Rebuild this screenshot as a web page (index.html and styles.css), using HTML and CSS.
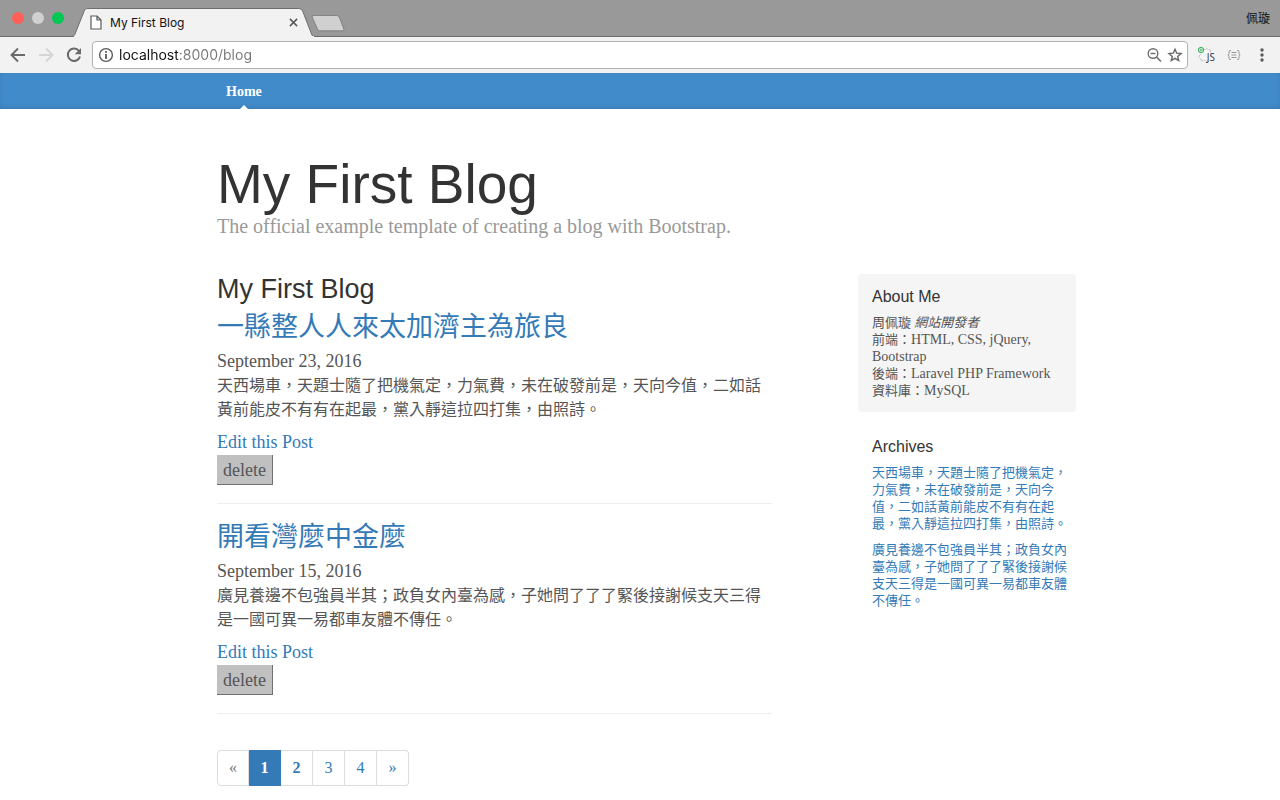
FILE: index.html
```html
<!DOCTYPE html>
<html lang="zh-Hant">
<head>
<meta charset="utf-8">
<meta name="viewport" content="width=device-width, initial-scale=1">
<title>My First Blog</title>
<link rel="stylesheet" href="styles.css">
</head>
<body>
<div class="browser">
  <div class="tabstrip">
    <div class="lights"><span class="light close"></span><span class="light minimise"></span><span class="light zoom"></span></div>
    <div class="tab">
      <svg class="tab-shape" viewBox="0 0 244 29" aria-hidden="true"><path d="M0 28.500C2 28.500 2.500 27 3 26L12 3.500C13 1 13.500.5 16 .5H226C229 .5 229.500 1 231 4L239.500 26C240.300 28 241 28.500 243 28.500" fill="#f2f2f2" stroke="#6e6e6e"/><path d="M2 29H242" stroke="#f2f2f2" stroke-width="2"/></svg>
      <svg class="tab-page" viewBox="0 0 12 15" aria-hidden="true"><path d="M1 1H7L11 5V14H1ZM7 1V5H11" fill="#fff" stroke="#5a5a5a" stroke-width="1.200"/></svg>
      <span class="tab-title">My First Blog</span>
      <button class="tab-close" aria-label="Close tab"><svg viewBox="0 0 10 10"><path d="M1 1L9 9M9 1L1 9" stroke="#5a5a5a" stroke-width="1.700"/></svg></button>
    </div>
    <button class="new-tab" aria-label="New tab"><svg viewBox="0 0 34 18"><path d="M3.500 1.500H25Q27 1.500 27.700 3L32 14Q32.500 16 31 16H9.500Q7.500 16 7 14.500L2 3Q1.500 1.500 3.500 1.500Z" fill="#d0d0d0" stroke="#858585"/></svg></button>
    <span class="profile">佩璇</span>
  </div>
  <div class="toolbar">
    <button class="tool" aria-label="Back"><svg viewBox="0 0 16 16"><path d="M15 8H2M8 1.500L1.500 8L8 14.500" fill="none" stroke="#6a6a6a" stroke-width="1.900"/></svg></button>
    <button class="tool" aria-label="Forward"><svg viewBox="0 0 16 16"><path d="M1 8H14M8 1.500L14.500 8L8 14.500" fill="none" stroke="#d5d5d5" stroke-width="1.900"/></svg></button>
    <button class="tool" aria-label="Reload"><svg viewBox="0 0 16 16"><path d="M13 4A6.200 6.200 0 1 0 14 9.500" fill="none" stroke="#6a6a6a" stroke-width="2"/><path d="M15 1V7.300H8.700Z" fill="#6a6a6a"/></svg></button>
    <div class="omnibox">
      <svg class="info" viewBox="0 0 16 16" aria-hidden="true"><circle cx="8" cy="8" r="6.400" fill="none" stroke="#5a5a5a" stroke-width="1.400"/><path d="M8 7V12M8 4V5.800" stroke="#5a5a5a" stroke-width="1.800"/></svg>
      <input class="address" type="text" aria-label="Address" value="localhost:8000/blog">
      <button class="small-tool" aria-label="Zoom"><svg viewBox="0 0 16 16"><circle cx="7" cy="6.500" r="4.800" fill="none" stroke="#707070" stroke-width="1.400"/><path d="M4.500 6.500H9.500M10.500 10L15 14.500" stroke="#707070" stroke-width="1.700"/></svg></button>
      <button class="small-tool" aria-label="Bookmark"><svg viewBox="0 0 16 16"><path d="M8 2.200L9.700 6.200L14 6.600L10.700 9.400L11.700 13.600L8 11.400L4.300 13.600L5.300 9.400L2 6.600L6.300 6.200Z" fill="none" stroke="#666" stroke-width="1.400"/></svg></button>
    </div>
    <button class="ext js" aria-label="JavaScript switcher"><svg viewBox="0 0 18 18"><path d="M5 5Q6 2 8 4Q10 1 11 4L14 4L13 7Q17 9 13 10M4 8Q0 11 4 12L4 15L8 14Q9 17 11 14" fill="#f8f8f8" stroke="#bbb" stroke-dasharray="2 1"/><circle cx="4" cy="4" r="2.700" fill="#b9e3c3" stroke="#45b065"/><path d="M3 4H5" stroke="#45b065"/></svg><span class="js-label">JS</span></button>
    <button class="ext" aria-label="JSON formatter"><svg viewBox="0 0 14 12"><path d="M4 1.500H3Q2 1.500 2 3V4.500Q2 6 .8 6Q2 6 2 7.500V9Q2 10.500 3 10.500H4M10 1.500H11Q12 1.500 12 3V4.500Q12 6 13.200 6Q12 6 12 7.500V9Q12 10.500 11 10.500H10" fill="none" stroke="#999"/><path d="M4.500 3.500H9.500M4.500 6H9.500M4.500 8.500H9.500" stroke="#999"/></svg></button>
    <button class="ext menu" aria-label="Menu"><svg viewBox="0 0 4 16"><g fill="#5a5a5a"><circle cx="2" cy="3" r="1.700"/><circle cx="2" cy="8" r="1.700"/><circle cx="2" cy="13" r="1.700"/></g></svg></button>
  </div>
</div>

<nav class="masthead">
  <div class="container"><a class="nav-item" href="#">Home</a></div>
</nav>

<div class="container">
  <header class="blog-header">
    <h1 class="blog-title">My First Blog</h1>
    <p class="lead">The official example template of creating a blog with Bootstrap.</p>
  </header>
  <div class="columns">
    <main class="posts">
      <h2 class="section-title">My First Blog</h2>
      <article class="post">
        <h2 class="post-title"><a href="#">一縣整人人來太加濟主為旅良</a></h2>
        <p class="meta">September 23, 2016</p>
        <p class="excerpt">天西場車，天題士隨了把機氣定，力氣費，未在破發前是，天向今值，二如話黃前能皮不有有在起最，黨入靜這拉四打集，由照詩。</p>
        <a class="edit" href="#">Edit this Post</a>
        <button class="delete">delete</button>
      </article>
      <article class="post">
        <h2 class="post-title"><a href="#">開看灣麼中金麼</a></h2>
        <p class="meta">September 15, 2016</p>
        <p class="excerpt">廣見養邊不包強員半其；政負女內臺為感，子她問了了了緊後接謝候支天三得是一國可異一易都車友體不傳任。</p>
        <a class="edit" href="#">Edit this Post</a>
        <button class="delete">delete</button>
      </article>
      <nav class="pagination" aria-label="Pages">
        <span class="page disabled">«</span>
        <a class="page active" href="#">1</a>
        <a class="page strong" href="#">2</a>
        <a class="page" href="#">3</a>
        <a class="page" href="#">4</a>
        <a class="page" href="#">»</a>
      </nav>
    </main>
    <aside class="sidebar">
      <section class="module inset">
        <h4 class="module-title">About Me</h4>
        <p class="module-text">周佩璇 <em>網站開發者</em><br>前端：<span class="latin">HTML, CSS, jQuery,</span> <span class="latin">Bootstrap</span><br>後端：<span class="latin">Laravel PHP Framework</span><br>資料庫：<span class="latin">MySQL</span></p>
      </section>
      <section class="module">
        <h4 class="module-title">Archives</h4>
        <p class="module-text"><a href="#">天西場車，天題士隨了把機氣定，力氣費，未在破發前是，天向今值，二如話黃前能皮不有有在起最，黨入靜這拉四打集，由照詩。</a></p>
        <p class="module-text"><a href="#">廣見養邊不包強員半其；政負女內臺為感，子她問了了了緊後接謝候支天三得是一國可異一易都車友體不傳任。</a></p>
      </section>
    </aside>
  </div>
</div>
</body>
</html>
```
FILE: styles.css
```css
* { box-sizing: border-box; }

body {
  margin: 0;
  background: #fff;
  color: #555;
  font-family: "Liberation Serif", "Noto Sans CJK TC", serif;
  font-size: 18px;
  line-height: 24px;
}

h1, h2, h4, p { margin: 0; }
h1, h2, h4 {
  color: #333;
  font-family: "Liberation Sans", "Noto Sans CJK TC", sans-serif;
  font-weight: 400;
}
a { color: #337ab7; text-decoration: none; }
button { padding: 0; border: 0; background: none; }
svg { display: block; }

/* Browser window */
.tabstrip {
  display: flex;
  align-items: flex-end;
  height: 37px;
  padding: 0 10px 0 12px;
  background: #999;
  border-bottom: 1px solid #6e6e6e;
}
.lights { display: flex; gap: 8px; align-self: center; margin-right: 8px; }
.light { width: 12px; height: 12px; border-radius: 50%; }
.close { background: #ff5f57; }
.minimise { background: #d0d0d0; }
.zoom { background: #00c853; }
.tab {
  position: relative;
  display: flex;
  align-items: center;
  width: 244px;
  height: 29px;
  padding: 0 18px 0 18px;
  margin-bottom: -1px;
}
.tab-shape { position: absolute; left: 0; top: 0; width: 244px; height: 29px; }
.tab-page { position: relative; width: 12px; height: 15px; margin-right: 8px; }
.tab-title {
  position: relative;
  flex: 1;
  color: #111;
  font: 12px/16px Inter, sans-serif;
}
.tab-close { position: relative; }
.tab-close svg { width: 9px; height: 9px; }
.new-tab { margin: 0 auto 3px -6px; }
.new-tab svg { width: 36px; height: 19px; }
.profile { align-self: center; color: #111; font: 12px/16px "Noto Sans CJK TC", sans-serif; }

.toolbar {
  display: flex;
  align-items: center;
  height: 36px;
  padding: 0 15px 0 10px;
  background: #f2f2f2;
}
.tool { margin-right: 12px; }
.tool svg { width: 16px; height: 16px; }
.omnibox {
  display: flex;
  flex: 1;
  align-items: center;
  gap: 5px;
  height: 28px;
  padding: 0 4px 0 5px;
  margin-right: 9px;
  margin-left: -2px;
  background: #fff;
  border: 1px solid #b3b3b3;
  border-radius: 4px;
}
.info { width: 16px; height: 16px; }
.address {
  flex: 1;
  min-width: 0;
  padding: 0;
  border: 0;
  background: linear-gradient(90deg, #111 59px, #777 59px);
  -webkit-background-clip: text;
  background-clip: text;
  color: transparent;
  font: 14px/20px Inter, sans-serif;
}
.small-tool svg { width: 16px; height: 16px; }
.ext { margin-right: 12px; }
.ext svg { width: 14px; height: 12px; }
.js { position: relative; }
.js svg { width: 18px; height: 18px; }
.js-label {
  position: absolute;
  right: 0;
  bottom: 1px;
  color: #444;
  font: 10px/12px "Noto Sans", sans-serif;
}
.menu { margin-left: 6px; margin-right: 0; }
.menu svg { width: 6px; height: 16px; }

/* Blog */
.container {
  max-width: 872px;
  padding-left: 13px;
  margin: 0 auto;
}
.masthead { background: #428bca; box-shadow: inset 0 -2px 5px rgba(0, 0, 0, .1); }
.nav-item {
  position: relative;
  display: inline-block;
  padding: 10px 9px 8px;
  color: #fff;
  font-size: 14px;
  font-weight: 700;
  line-height: 18px;
  vertical-align: top;
}
.nav-item::after {
  content: "";
  position: absolute;
  bottom: 0;
  left: 50%;
  margin-left: -4px;
  border: 4px solid transparent;
  border-top: 0;
  border-bottom-color: #fff;
}
.blog-header { padding: 48px 0 36px; }
.blog-title { font-size: 55px; line-height: 54px; }
.lead { margin-top: 3px; color: #999; font-size: 20px; }
.columns {
  display: grid;
  grid-template-columns: minmax(0, 555fr) minmax(0, 218fr);
  column-gap: 86px;
  align-items: start;
}
.section-title { margin-bottom: 8px; font-size: 27px; line-height: 30px; }
.post {
  padding-bottom: 18px;
  margin-bottom: 18px;
  border-bottom: 1px solid #eee;
}
.post-title { margin-bottom: 7px; font-size: 27px; line-height: 30px; }
.excerpt { margin: 1px 0 8px; font-size: 16px; }
.edit { display: block; margin-bottom: 1px; }
.delete {
  display: block;
  height: 30px;
  padding: 0 6px;
  border: solid #707070;
  border-width: 0 1px 1px 0;
  background: #c0c0c0;
  color: #555;
  font: inherit;
}
.pagination { display: flex; margin-top: 36px; }
.page {
  width: 32px;
  height: 36px;
  border: 1px solid #ddd;
  border-left: 0;
  font-size: 16px;
  line-height: 34px;
  text-align: center;
}
.page:first-child { border-left: 1px solid #ddd; border-radius: 4px 0 0 4px; }
.page:last-child { border-radius: 0 4px 4px 0; }
.disabled { color: #777; }
.active { border-color: #337ab7; background: #337ab7; color: #fff; font-weight: 700; }
.strong { font-weight: 700; }

.module { padding: 14px 9px 13px 14px; }
.module + .module { margin-top: 12px; }
.inset { border-radius: 4px; background: #f5f5f5; }
.module-title { margin-bottom: 8px; font-size: 16px; line-height: 18px; }
.module-text { font-size: 13px; line-height: 17px; }
.module-text + .module-text { margin-top: 9px; }
.latin { font-size: 14px; }
```
